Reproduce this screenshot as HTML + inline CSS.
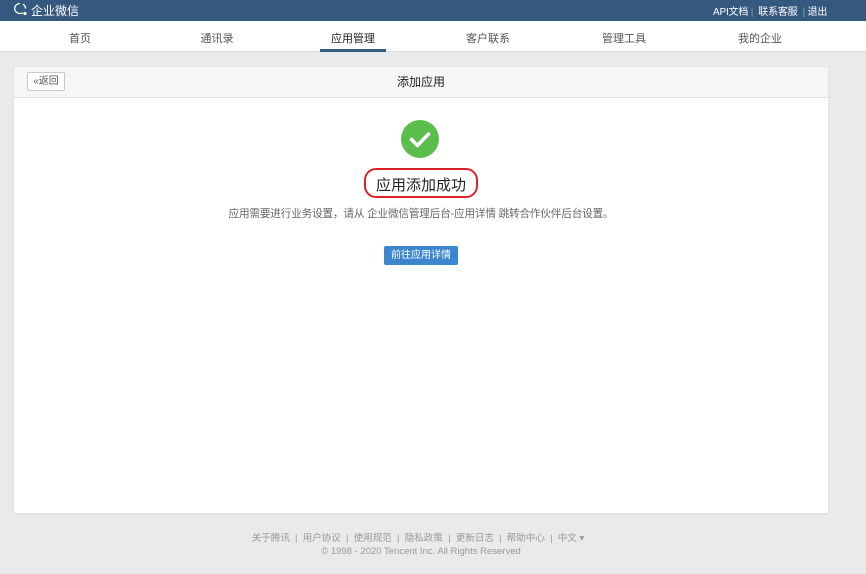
<!DOCTYPE html>
<html><head><meta charset="utf-8"><style>
*{margin:0;padding:0;box-sizing:border-box}
body{width:866px;height:574px;background:#e9eaec;font-family:"Liberation Sans","Noto Sans CJK SC",sans-serif;position:relative;overflow:hidden}
.top{position:absolute;left:0;top:0;width:866px;height:21px;background:#35587f;color:#fff;font-size:11px}
.nav{position:absolute;left:0;top:21px;width:866px;height:31px;background:#fff;border-bottom:1px solid #dcdde0}
.nav span{position:absolute;top:9px;font-size:11px;color:#555;transform:translateX(-50%)}
.card{position:absolute;left:14px;top:67px;width:814px;height:446px;background:#fff;border-radius:2px;box-shadow:0 1px 2px rgba(0,0,0,.08)}
.ch{height:31px;background:#f6f6f6;border-bottom:1px solid #e3e3e3;position:relative}
.abs{position:absolute}
</style></head><body>
<div class="top">
<svg class="abs" style="left:13px;top:2px" width="16" height="15" viewBox="0 0 16 15"><path d="M7 1.5a5.5 5 0 1 0 3 9.3" fill="none" stroke="#fff" stroke-width="1.3"/><path d="M12.5 6.5a5.5 5 0 0 0-2.5-4.3" fill="none" stroke="#fff" stroke-width="1.3"/><circle cx="12" cy="11.5" r="1.6" fill="#fff"/></svg>
<span class="abs" style="left:31px;top:2px;font-size:12px">企业微信</span>
<span class="abs" style="left:713px;top:3px;font-size:10px;letter-spacing:-0.2px">API文档 <span style="color:#8aa">|</span>&nbsp; 联系客服 &nbsp;<span style="color:#8aa">|</span> 退出</span>
</div>
<div class="nav">
<span style="left:80px">首页</span><span style="left:217px">通讯录</span><span style="left:353px;color:#222">应用管理</span><span style="left:488px">客户联系</span><span style="left:624px">管理工具</span><span style="left:760px">我的企业</span>
<div class="abs" style="left:320px;top:28px;width:66px;height:3px;background:#35587f"></div>
</div>
<div class="card">
<div class="ch">
<div class="abs" style="left:13px;top:5px;width:38px;height:19px;border:1px solid #c8c8c8;border-radius:2px;background:#fff;font-size:10px;color:#555;line-height:17px;text-align:center">«返回</div>
<div class="abs" style="left:0;width:814px;top:6px;text-align:center;font-size:12px;color:#222">添加应用</div>
</div>
<svg class="abs" style="left:387px;top:53px" width="38" height="38"><circle cx="19" cy="19" r="19" fill="#5bbd4b"/><path d="M10.5 19.5l6 6 11-11.5" fill="none" stroke="#fff" stroke-width="3.5" stroke-linecap="round" stroke-linejoin="round"/></svg>
<div class="abs" style="left:350px;top:101px;width:114px;height:30px;border:2.5px solid #d9252a;border-radius:12px"></div>
<div class="abs" style="left:0;width:814px;top:107px;text-align:center;font-size:15px;color:#222">应用添加成功</div>
<div class="abs" style="left:0;width:814px;top:139px;text-align:center;font-size:10.6px;color:#666;letter-spacing:-0.15px">应用需要进行业务设置，请从 企业微信管理后台-应用详情 跳转合作伙伴后台设置。</div>
<div class="abs" style="left:370px;top:179px;width:74px;height:19px;background:#3b86cc;border-radius:2px;color:#fff;font-size:10px;line-height:19px;text-align:center">前往应用详情</div>
</div>
<div class="abs" style="left:0;width:836px;top:530px;text-align:center;font-size:9.5px;color:#999">关于腾讯 &nbsp;|&nbsp; 用户协议 &nbsp;|&nbsp; 使用规范 &nbsp;|&nbsp; 隐私政策 &nbsp;|&nbsp; 更新日志 &nbsp;|&nbsp; 帮助中心 &nbsp;|&nbsp; 中文 ▾</div>
<div class="abs" style="left:0;width:842px;top:546px;text-align:center;font-size:9.5px;color:#999">© 1998 - 2020 Tencent Inc. All Rights Reserved</div>
</body></html>
